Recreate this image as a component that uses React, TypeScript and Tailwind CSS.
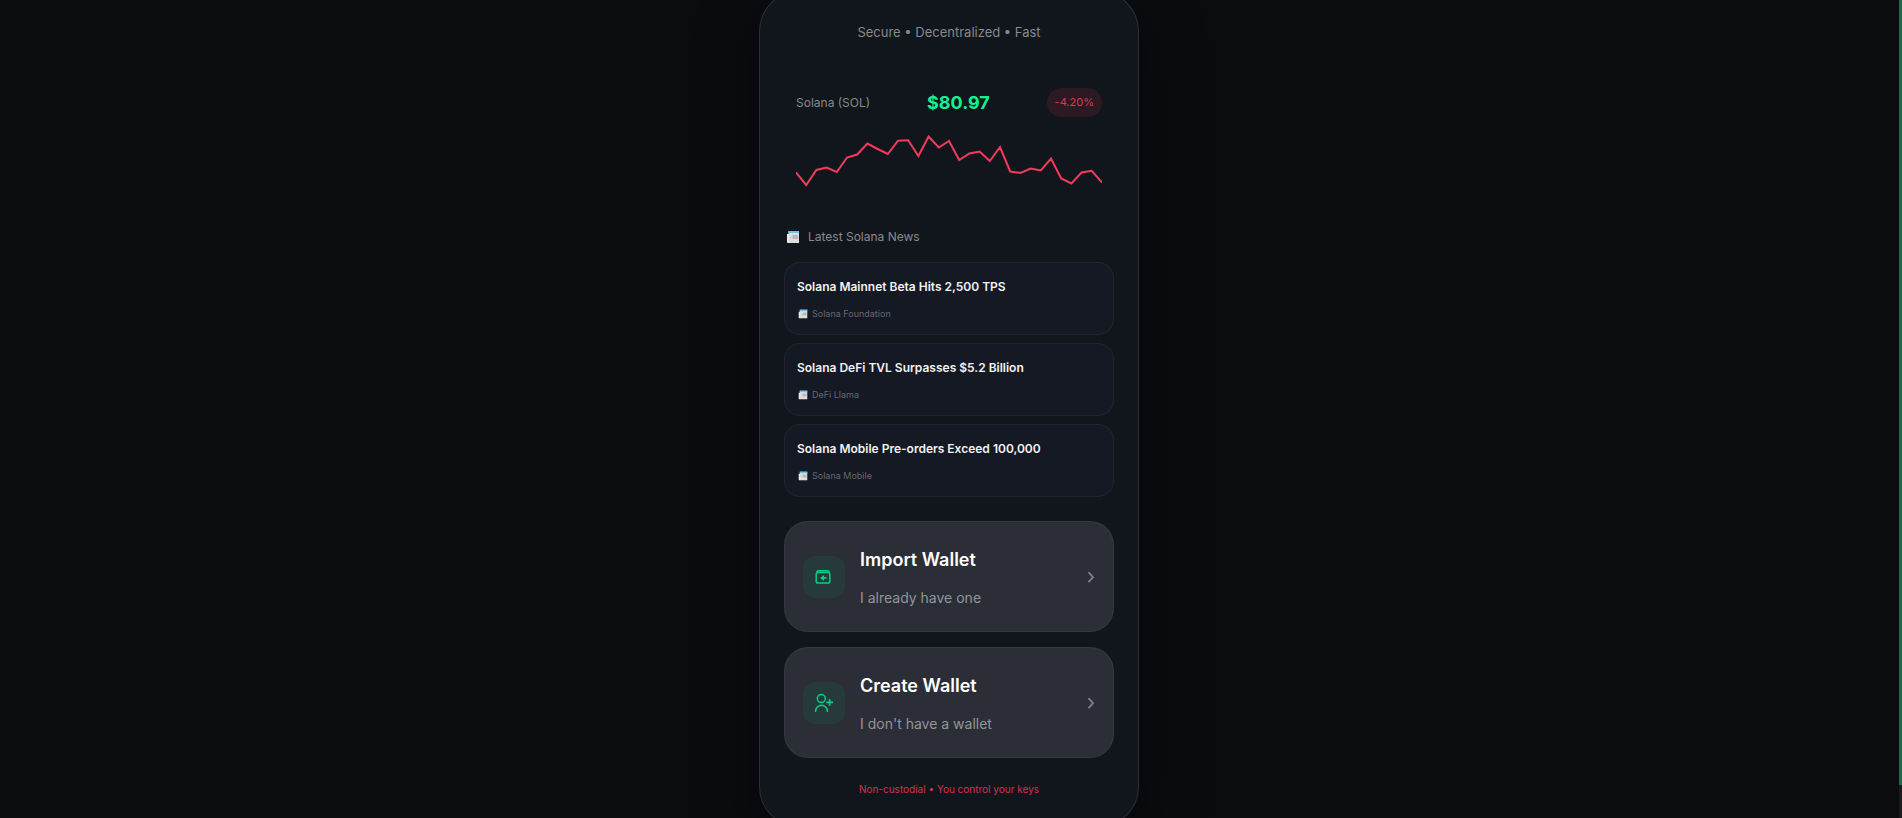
import React from "react";

const prices = [
  172.5, 185, 170, 167.5, 172, 157.5, 154.5, 143.5, 149, 154, 140.7, 140.3, 156, 136.5, 147.5, 141,
  160, 153.5, 151.5, 161, 147, 171.5, 173, 168.5, 170.5, 158.5, 178.5, 183.5, 172.5, 170.8, 182.5,
];

const news = [
  { title: "Solana Mainnet Beta Hits 2,500 TPS", source: "Solana Foundation" },
  { title: "Solana DeFi TVL Surpasses $5.2 Billion", source: "DeFi Llama" },
  { title: "Solana Mobile Pre-orders Exceed 100,000", source: "Solana Mobile" },
];

function NewspaperIcon({ className }: { className: string }) {
  return (
    <svg viewBox="0 0 14 14" className={className} aria-hidden="true">
      <path d="M1 4H3V13H2Q1 13 1 12Z" fill="#f0f0f0" />
      <path d="M2.5 1H13V13H2.5Z" fill="#dedede" />
      <path d="M2.5 1H13V3H2.5Z" fill="#6cc6e8" />
      <path d="M6.5 5H12V9H6.5Z" fill="#b9b9b9" />
      <path d="M4 7.5H5.5" stroke="#c4c4c4" />
    </svg>
  );
}

function ImportIcon() {
  return (
    <svg viewBox="0 0 16 16" className="mr-0.5 size-4" fill="none" stroke="#00d084" aria-hidden="true">
      <rect x="1.2" y="3.6" width="13.6" height="10.4" rx="1.8" strokeWidth="1.5" />
      <path d="M1.8 4V3.4Q1.8 1.7 3.4 1.7H12.6Q14.2 1.7 14.2 3.4V4" strokeWidth="1.4" />
      <path d="M11.5 8.9H7" strokeWidth="1.8" />
      <path d="M9 5.9V11.9L5 8.9Z" fill="#00d084" stroke="none" />
    </svg>
  );
}

function CreateIcon() {
  return (
    <svg viewBox="0 0 20 20" className="size-5" fill="none" stroke="#00d084" strokeWidth="1.5" aria-hidden="true">
      <circle cx="7.3" cy="5.6" r="4" />
      <path d="M1.6 19V18.2A5.9 5.9 0 0 1 13.4 18.2V19" />
      <path d="M15.6 5.9V12.7M12.2 9.3H19" strokeWidth="1.7" />
    </svg>
  );
}

function WalletAction({ icon, title, note }: { icon: React.ReactNode; title: string; note: string }) {
  return (
    <button
      type="button"
      className="flex w-full items-center gap-[15px] rounded-3xl border border-white/5 bg-[#2b2e36] px-[18px] py-5 text-left"
    >
      <span className="flex size-[42px] shrink-0 items-center justify-center rounded-xl bg-[#263a3c]">{icon}</span>
      <span className="flex flex-1 flex-col gap-2">
        <span className="text-lg leading-[35px] font-semibold text-white">{title}</span>
        <span className="text-sm leading-[26px] text-[#92959c]">{note}</span>
      </span>
      <svg viewBox="0 0 8 12" className="h-3 w-2" fill="none" stroke="#7d8088" strokeWidth="1.8" aria-hidden="true">
        <path d="M1.5 1.2L6 6.2L1.5 11.2" />
      </svg>
    </button>
  );
}

export default function App() {
  const points = prices.map((y, i) => `${(i * 306) / (prices.length - 1)},${y - 129}`).join(" ");
  return (
    <div className="flex h-screen overflow-hidden bg-[#0a0c10] font-['Inter',sans-serif]">
      <main className="flex flex-1 items-center justify-center pr-px">
        <div className="w-full max-w-[380px] shrink-0 rounded-[40px] border border-white/10 bg-[#11161d] px-6 pt-[31px] pb-[29px] shadow-[0_20px_60px_rgba(0,0,0,0.5)]">
          <p className="text-center text-[13px] leading-[18px] text-[#88898c]">Secure • Decentralized • Fast</p>

          <section className="mt-[31px] px-3 py-4">
            <div className="flex items-center justify-between">
              <span className="text-xs text-[#88898c]">Solana (SOL)</span>
              <span className="text-lg leading-7 font-bold text-[#14f195]">$80.97</span>
              <span className="rounded-full bg-[#2c1922] px-2 text-[11px] leading-[29px] text-[#d93954]">-4.20%</span>
            </div>
            <svg viewBox="0 0 306 60" className="mt-3 h-[60px] w-full" role="img" aria-label="Solana price">
              <polyline points={points} fill="none" stroke="#f23a5b" strokeWidth="2" />
            </svg>
          </section>

          <section className="mt-5">
            <h2 className="flex items-center gap-2 text-xs leading-6 text-[#88898c]">
              <NewspaperIcon className="ml-0.5 size-[14px]" />
              Latest Solana News
            </h2>
            <ul className="mt-[13px] flex flex-col gap-2">
              {news.map((item) => (
                <li key={item.title} className="rounded-2xl border border-white/5 bg-[#151923] px-3 pt-3 pb-[13px]">
                  <h3 className="text-xs leading-6 font-semibold text-[#f2f2f2]">{item.title}</h3>
                  <p className="mt-[7px] flex items-center gap-1 text-[9px] leading-[15px] text-[#64676f]">
                    <NewspaperIcon className="ml-px size-[10px]" />
                    {item.source}
                  </p>
                </li>
              ))}
            </ul>
          </section>

          <div className="mt-6 flex flex-col gap-[15px]">
            <WalletAction icon={<ImportIcon />} title="Import Wallet" note="I already have one" />
            <WalletAction icon={<CreateIcon />} title="Create Wallet" note="I don't have a wallet" />
          </div>

          <p className="mt-[23px] text-center text-[10px] leading-4 text-[#d6304f]">Non-custodial • You control your keys</p>
        </div>
      </main>
      <div className="w-[3px] bg-[#1a1a1a]">
        <div className="h-[96%] bg-[#1a6b48]" />
      </div>
    </div>
  );
}
